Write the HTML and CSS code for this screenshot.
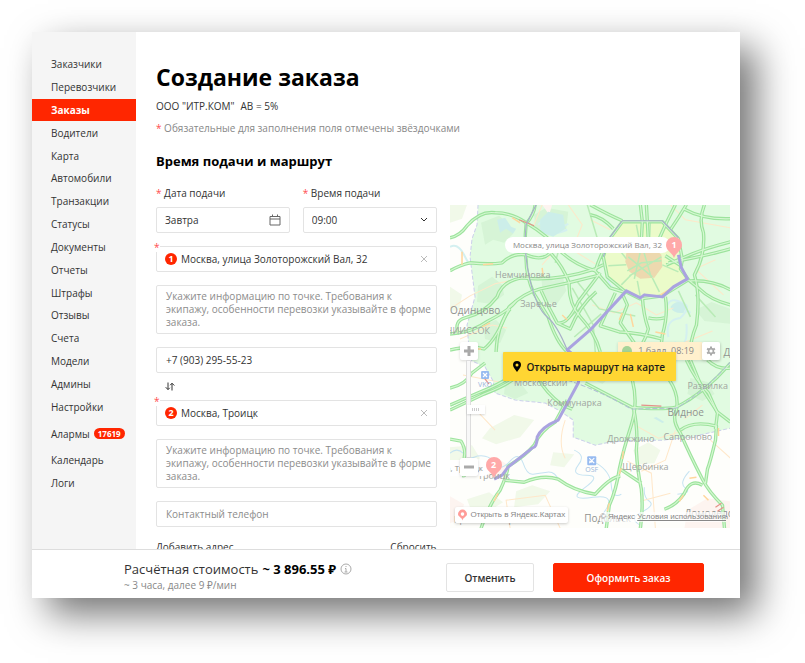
FILE: index.html
```html
<!DOCTYPE html>
<html lang="ru">
<head>
<meta charset="utf-8">
<meta name="viewport" content="width=device-width, initial-scale=1">
<title>Создание заказа</title>
<link rel="stylesheet" href="styles.css">
</head>
<body>
<div class="window">
  <div class="workspace">
    <nav class="sidebar">
      <ul class="menu menu-main">
        <li><a href="#">Заказчики</a></li>
        <li><a href="#">Перевозчики</a></li>
        <li><a href="#" class="active" aria-current="page">Заказы</a></li>
        <li><a href="#">Водители</a></li>
        <li><a href="#">Карта</a></li>
        <li><a href="#">Автомобили</a></li>
        <li><a href="#">Транзакции</a></li>
        <li><a href="#">Статусы</a></li>
        <li><a href="#">Документы</a></li>
        <li><a href="#">Отчеты</a></li>
        <li><a href="#">Штрафы</a></li>
        <li><a href="#">Отзывы</a></li>
        <li><a href="#">Счета</a></li>
        <li><a href="#">Модели</a></li>
        <li><a href="#">Админы</a></li>
        <li><a href="#">Настройки</a></li>
      </ul>
      <ul class="menu">
        <li class="alarms"><a href="#">Алармы <span class="count">17619</span></a></li>
        <li><a href="#">Календарь</a></li>
        <li><a href="#">Логи</a></li>
      </ul>
    </nav>

    <main class="content">
      <h1>Создание заказа</h1>
      <p class="company"><span>ООО "ИТР.КОМ"</span><span>АВ = 5%</span></p>
      <p class="hint"><span class="star">*</span> Обязательные для заполнения поля отмечены звёздочками</p>
      <h2>Время подачи и маршрут</h2>

      <div class="columns">
        <form class="route" id="order">
          <div class="pair">
            <div class="field">
              <label for="date"><span class="star">*</span> Дата подачи</label>
              <div class="box">
                <input id="date" type="text" value="Завтра">
                <svg class="calendar" viewBox="0 0 12 12" aria-hidden="true"><path d="M1 2.500h10v8.500H1zM1 5h10M3.500 0.500v2M8.500 0.500v2"/></svg>
              </div>
            </div>
            <div class="field">
              <label for="time"><span class="star">*</span> Время подачи</label>
              <div class="box">
                <select id="time"><option>09:00</option></select>
                <svg class="chevron" viewBox="0 0 8 6" aria-hidden="true"><path d="M1 1l3 3 3-3"/></svg>
              </div>
            </div>
          </div>

          <div class="box address">
            <span class="star corner">*</span>
            <span class="number">1</span>
            <input type="text" aria-label="Адрес 1" value="Москва, улица Золоторожский Вал, 32">
            <button class="clear" type="button" aria-label="Очистить адрес 1"><svg viewBox="0 0 8 8"><path d="M1 1l6 6M7 1L1 7"/></svg></button>
          </div>
          <textarea class="note" rows="3" aria-label="Информация по точке 1" placeholder="Укажите информацию по точке. Требования к экипажу, особенности перевозки указывайте в форме заказа."></textarea>
          <div class="box"><input type="tel" aria-label="Телефон 1" value="+7 (903) 295-55-23"></div>

          <button class="swap" type="button" aria-label="Поменять адреса местами"><svg viewBox="0 0 10 9"><path d="M3 .5v7M.7 5.2L3 7.6l1.800-1.800M7 8.500V1.500M5.200 3.200L7 1.200l2.300 2.300"/></svg></button>

          <div class="box address">
            <span class="star corner">*</span>
            <span class="number">2</span>
            <input type="text" aria-label="Адрес 2" value="Москва, Троицк">
            <button class="clear" type="button" aria-label="Очистить адрес 2"><svg viewBox="0 0 8 8"><path d="M1 1l6 6M7 1L1 7"/></svg></button>
          </div>
          <textarea class="note" rows="3" aria-label="Информация по точке 2" placeholder="Укажите информацию по точке. Требования к экипажу, особенности перевозки указывайте в форме заказа."></textarea>
          <div class="box"><input type="tel" aria-label="Телефон 2" placeholder="Контактный телефон"></div>
          <div class="links"><a href="#">Добавить адрес</a><a href="#">Сбросить</a></div>
        </form>

        <section class="map" aria-label="Маршрут">
          <svg class="canvas" viewBox="0 0 280 323" preserveAspectRatio="xMidYMid slice">
            <defs>
              <g id="roads">
                <path d="M0 33Q10 31 17 21Q30 6 45 8Q62 8 76 18Q98 31 112 48Q125 60 145 66L160 83L176 88"/>
                <path d="M0 66Q10 60 20 58Q40 60 52 58Q62 48 76 50Q92 57 100 48"/>
                <path d="M85 0Q84 10 76 19Q74 40 76 55Q76 72 84 89Q92 102 98 112Q106 137 117 147"/>
                <path d="M0 129L8 128Q4 116 15 113Q35 108 47 92Q52 76 72 73Q105 77 145 64L153 60"/>
                <path d="M0 145Q22 140 34 144Q47 134 59 102Q74 88 90 84Q120 78 150 70"/>
                <path d="M8 128Q22 127 38 116Q60 105 66 96"/>
                <path d="M60 104Q47 120 46 147M100 48Q112 60 119 78Q118 98 130 112Q145 128 150 147"/>
                <path d="M91 86Q98 102 107 118Q118 120 128 97L150 68M107 118L120 124Q130 100 146 87"/>
                <path d="M140 10Q152 12 163 24M140 0Q158 10 172 16M145 66Q150 50 158 36L172 17L212 17L228 34L232 55L230 64L238 75L212 91L190 94L174 86L157 72L153 52L158 36"/>
                <path d="M190 0L192 17L191 36M196 0L197 17L198 37M225 0L216 18L207 38M236 0Q229 12 220 25M280 37Q257 43 242 49L216 60M280 44Q260 50 218 58"/>
                <path d="M254 0Q248 15 253 28Q255 50 244 70Q250 90 246 120Q238 140 240 155L252 184L267 207L280 217"/>
                <path d="M280 14Q253 15 233 4M280 100Q260 95 249 84L238 75M232 62L215 51M240 76Q262 75 280 85"/>
                <path d="M192 92Q193 110 198 124Q194 140 184 147L182 175Q188 198 181 220Q173 245 169 264Q166 285 159 300L156 323"/>
                <path d="M215 92Q218 110 212 130L210 147L219 175Q229 190 226 205Q221 215 230 228Q239 249 252 274Q258 286 272 300L274 323"/>
                <path d="M198 113Q206 115 214 113M165 88L150 121L169 127Q190 128 211 134M172 89L177 100L170 118L184 138L182 147"/>
                <path d="M0 200L30 187Q48 180 60 172M0 205L34 189Q55 181 65 173M0 183Q15 180 22 168L35 158"/>
                <path d="M88 173Q95 187 112 200L122 204M135 178L181 202Q210 205 226 202Q255 187 280 158"/>
                <path d="M0 234L11 236Q18 247 12 260L14 272M31 323Q39 299 50 285Q57 270 58 261Q75 251 84 240Q90 226 105 217L117 195"/>
                <path d="M54 275L74 277Q93 269 108 274Q124 286 145 289Q160 272 170 271"/>
                <path d="M183 202Q188 225 186 245Q187 266 191 284Q193 302 190 323M170 264L191 278"/>
                <path d="M230 225Q243 215 266 221L265 235Q260 256 257 264L255 278M214 304Q226 300 234 288Q240 273 252 280"/>
                <path d="M236 155Q245 175 258 188L267 208L265 224M257 155Q267 165 280 163"/>
              </g>
            </defs>
            <rect width="280" height="323" fill="#fefefb"/>
            <path d="M28 0L27 20L22 34L20 52L25 92L17 120L20 155L35 162L43 176L45 188L65 195L95 198L110 206L123 215L123 232L145 240L160 237L185 235L213 235L240 232L280 223V0Z" fill="#dcfbdc"/>
            <g fill="#cff3cf">
              <path d="M31 18l18-7 9 8 5 10-9 9-11-3-8 5zM28 81l14-9 10 8 2 10-12 9-15-2zM33 120l13-5 10 10-6 13-15-4zM91 70l12 6 10-3 3 13-10 14-13-5zM245 105l16-8 19 7v15l-26-3zM84 10l12-7 22 4-2 17-18 7-13-8zM144 147l15 5 7 15-14 12-14-7zM240 173l17 4 7 12-12 7-15-7zM55 177l16 2 7 9-13 6-11-5z"/>
            </g>
            <g fill="#eff8e6">
              <path d="M0 0h17l-5 14-12 4zM0 82l12 8-3 15-9 1zM40 223l24-13 20 5-14 17-24 7-14-6zM0 242l22-2 8 13-16 9-14-4zM66 286l16-6 18 6-12 13-24 3zM183 245l15-8 12 8-6 13-17 1zM17 294l22-7 14 10-13 8-20-3zM103 247l21 2-10 13-14-2z"/>
            </g>
            <path d="M237 305l20-12 23 3v27h-46zM0 291l14 8-4 15-10 4zM92 0h10l-3 10zM38 261l10-8 10 7-9 12-13 1z" fill="#fdf3ee"/>
            <g fill="none" stroke="#cdeeee" stroke-width="2">
              <path d="M0 42Q8 38 14 50T20 58M88 20Q98 10 105 17T118 19M90 27Q104 31 117 25M157 70Q158 83 166 85M218 132Q214 115 230 113Q242 101 232 98Q220 91 216 102M224 137Q238 147 236 119M232 102L240 108"/>
            </g>
            <path d="M47 15l8-2 6 9 5 2-3 5-7-5-6 4zM90 15l8-8 15 3 2 14-12 8-13-5zM220 102q7-9 16-1l-3 7q-10 1-13-6zM203 213l9 5 2-1-8-5z" fill="#c4ece6"/>
            <g fill="none" stroke="#bcdff0" stroke-width="1">
              <path d="M0 248q7-6 13 0t11 4 11-1 11 8 14-3 13 2 10 11 14-2 12 9M124 245q12 5 4 15t8 10-2 13 9 9 7 20M146 258q14 8 15 22t10 9M194 282q-1 10 5 14t-8 11 1 14M239 266q-11 12-4 17t-8 6"/>
            </g>
            <g fill="none" stroke="#ffe4c0" stroke-width="1">
              <path d="M0 104L20 91 45 79 65 75M10 134L42 120 57 123M92 60l14-16 19-7 20 7M142 100l22 8 22-10 20 12 17-7M45 225L28 207M115 215q-8 23 0 38M13 170l36 7 23-8M205 323l-4-55-24-12M183 219l25 14 24-7M252 200l-18 14M60 323l-4-28 39-5 15 33M140 15l20 10M225 225l-10 30-24 11M260 235l20 18M220 288l-30 8"/>
              <path d="M220 0l15 15 45 8M265 55l-20 9 28 26M262 126l-34 14 7 14M92 0l-9 22M118 0l14 20-10 25 23 14"/>
            </g>
            <path d="M172 16L212 16L228 33L231 62L237 74L210 92L190 93L173 85L157 70L153 52L160 32Z" fill="#e8fbc0"/>
            <path d="M176 48l11-8 15 2 9 8 1 12-8 11-14 1-11-7-4-10z" fill="#ead3a2"/>
            <path d="M28 0L27 20L22 34L20 52L25 92L17 120L20 155L35 162L43 176L45 188L65 195L95 198L110 206L123 215L123 232L145 240L160 237L185 235L213 235L240 232L280 223" fill="none" stroke="#c3c8e8" stroke-dasharray="4 2"/>
            <g fill="none" stroke="#ade8aa" stroke-width="1.500">
              <path d="M162 36l14 18M158 61l18-1M171 80l10-10M190 92l-3-16M209 87l-7-14M228 67l-16-7M225 35l-15 12M186 20l4 20M200 18l-1 22M177 66l14-8 20-2M184 74l7-32M201 73l-9-31M178 52l24 20M211 52l-32 19"/>
              <path d="M122 83l21 37 2 27M127 77l22 27 36 7M142 92l-24 22M151 109l-27 23M245 90l20 22M228 86l12 26M137 0l12 40M110 40l-5 18"/>
            </g>
            <use href="#roads" fill="none" stroke="#8cdf8c" stroke-width="3.400" stroke-linejoin="round"/>
            <use href="#roads" fill="none" stroke="#cff7cb" stroke-width="1.200" stroke-linejoin="round"/>
            <g fill="none" stroke="#ffd08c" stroke-width="1.500">
              <path d="M12 47v13M33 60l10-1M62 13l8 5M92 63l1 9M32 122l8-4M112 110l5 5M25 144l6 0M48 288l-4 8M173 246l-1 8M169 269l2-6M233 290l-4 6M239 273l7-1M159 298l-2 8M268 223v8M153 35l-4 12M180 109l3 13M210 90l12-7M253 290l5 5M205 127l10 2M169 115l3-7M210 44l15-7"/>
            </g>
            <g fill="none" stroke="#e07f74" stroke-width="1.200"><path d="M69 15l15 6M191 200l20 1M36 166l-1 8 4 5M265 302l6-4M267 306l6-4"/></g>
            <path d="M86 0L76 20Q73 48 80 76T97 112T117 145M153 52L160 32L172 16H212L228 33" fill="none" stroke="#99a2c0" stroke-width="1.200"/>
            <path d="M97 170Q136 178 181 204L226 203Q250 190 280 157" fill="none" stroke="#a3b5cc" stroke-dasharray="5 2"/>
            <path d="M228 50L231 63L237 74L223 82L212 92L194 90L190 93L176 86L140 125L117 145Q134 156 128 178L108 215Q91 222 87 232Q87 242 82 243L58 262L52 270L44 274" fill="none" stroke="#9c93db" stroke-width="3" stroke-linejoin="round"/>
            <g class="places">
              <text x="45" y="73">Немчиновка</text><text x="70" y="102">Заречье</text>
              <text class="city" x="0" y="109">Одинцово</text><text x="-10" y="129">ВНИИССОК</text>
              <text x="64" y="181">Московский</text><text x="97" y="201">Коммунарка</text>
              <text x="237" y="184">Развилка</text><text class="city" x="217" y="211">Видное</text>
              <text x="157" y="237">Дрожжино</text><text x="213" y="235">Сапроново</text>
              <text x="172" y="265">Щербинка</text><text x="28" y="274">Троицк</text>
              <text x="4" y="318">Красная Пахра</text><text class="city" x="134" y="317">Подольск</text>
              <text class="city" x="234" y="312">Домодедово</text><text class="city" x="273" y="151">Дзержинский</text>
              <text class="port" x="28" y="182">VKO</text><text class="port" x="135" y="267">OSF</text>
            </g>
            <g fill="#86b0ee"><rect x="31" y="166" width="8" height="8" rx="1"/><rect x="137" y="251" width="9" height="9" rx="1"/></g>
            <path d="M139 253l5 5M144 253l-5 5M139 256l3 1M33 168l4 4M37 168l-4 4" stroke="#fff" stroke-width="1.200"/>
          </svg>

          <span class="place place-from">Москва, улица Золоторожский Вал, 32</span>
          <span class="place place-to">Москва, Троицк</span>
          <span class="pin pin-from"><svg viewBox="0 0 16 22" aria-hidden="true"><path d="M8 0a8 8 0 0 1 8 8c0 6-6 7-8 13C6 15 0 14 0 8a8 8 0 0 1 8-8z"/></svg><b>1</b></span>
          <span class="pin pin-to"><svg viewBox="0 0 16 22" aria-hidden="true"><path d="M8 0a8 8 0 0 1 8 8c0 6-6 7-8 13C6 15 0 14 0 8a8 8 0 0 1 8-8z"/></svg><b>2</b></span>

          <div class="zoom">
            <button type="button" aria-label="Приблизить"><svg viewBox="0 0 10 10"><path d="M5 0v10M0 5h10"/></svg></button>
            <span class="track"><i></i></span>
            <button type="button" aria-label="Отдалить"><svg viewBox="0 0 10 10"><path d="M0 5h10"/></svg></button>
          </div>

          <div class="traffic">
            <span class="score"><i></i>1 балл, 08:19</span>
            <button type="button" aria-label="Настройки пробок"><svg viewBox="0 0 12 12"><path d="M6 1.500v9M2.100 3.700l7.800 4.600M9.900 3.700L2.100 8.300" stroke-width="2"/><circle cx="6" cy="6" r="2.400" fill="#fff" stroke-width="1.600"/></svg></button>
          </div>

          <button class="open-route" type="button"><svg viewBox="0 0 8 11" aria-hidden="true"><path d="M4 0a4 4 0 0 1 4 4c0 2.500-2.500 4.500-4 7C2.500 8.500 0 6.500 0 4a4 4 0 0 1 4-4zm0 2.500a1.500 1.500 0 1 0 0 3 1.500 1.500 0 0 0 0-3z"/></svg>Открыть маршрут на карте</button>

          <a class="yandex" href="#"><svg viewBox="0 0 10 12" aria-hidden="true"><path d="M5 0a5 5 0 0 1 5 5c0 3-4 3.500-5 7C4 8.500 0 8 0 5a5 5 0 0 1 5-5zm0 3a2 2 0 1 0 0 4 2 2 0 0 0 0-4z"/></svg>Открыть в Яндекс.Картах</a>
          <small class="terms">© Яндекс <a href="#">Условия использования</a></small>
        </section>
      </div>
    </main>
  </div>

  <footer class="summary">
    <div class="price">
      <p class="total">Расчётная стоимость <b>~ 3 896.55 ₽</b> <svg viewBox="0 0 12 12" role="img" aria-label="Подробнее"><circle cx="6" cy="6" r="5"/><path d="M6 3v1M5 5.500h1V9M4.500 9h3"/></svg></p>
      <p class="rate">~ 3 часа, далее 9 ₽/мин</p>
    </div>
    <button class="cancel" type="button">Отменить</button>
    <button class="submit" type="submit" form="order">Оформить заказ</button>
  </footer>
</div>
</body>
</html>
```
FILE: styles.css
```css
* {
  box-sizing: border-box;
}

body {
  margin: 0;
  padding: 32px 65px 65px 32px;
  height: 100vh;
  overflow: hidden;
  background: #fff;
  color: #333;
  font: 10px/14px "Open Sans", "Noto Sans", sans-serif;
}

h1, h2, p, ul {
  margin: 0;
  padding: 0;
}

button, input, select, textarea {
  font: inherit;
  color: inherit;
}

button {
  padding: 0;
  border: 0;
  background: none;
}

a {
  color: inherit;
  text-decoration: none;
}

svg {
  display: block;
  fill: none;
  stroke: currentColor;
}

.window {
  display: flex;
  flex-direction: column;
  height: 100%;
  background: #fff;
  box-shadow: 16px 16px 36px rgba(0, 0, 0, 0.55);
}

.workspace {
  display: flex;
  flex: 1;
  min-height: 0;
  overflow: hidden;
}

/* Sidebar */

.sidebar {
  flex: 0 0 104px;
  padding-top: 21px;
  background: #f5f5f5;
}

.menu {
  list-style: none;
}

.menu-main {
  display: grid;
  grid-auto-rows: 1fr;
  height: 365px;
}

.menu a {
  display: flex;
  align-items: center;
  gap: 4px;
  height: 100%;
  min-height: 22px;
  padding-left: 19px;
}

.menu li {
  min-height: 23px;
}

.menu-main li {
  min-height: 0;
}

.menu .active {
  background: #ff2600;
  color: #fff;
  font-weight: 700;
}

.menu .alarms a {
  height: 31px;
}

.count {
  padding: 0 4px;
  border-radius: 6px;
  background: #ff2600;
  color: #fff;
  font-size: 8px;
  font-weight: 700;
  line-height: 11px;
}

/* Order form */

.content {
  flex: 1;
  min-width: 0;
  padding: 29px 10px 0 20px;
}

h1 {
  color: #000;
  font-size: 23px;
  line-height: 32px;
}

.company {
  display: flex;
  gap: 6px;
  margin-top: 6px;
}

.hint {
  margin-top: 8px;
  color: #888;
}

.star {
  color: #ff4d4f;
}

h2 {
  margin-top: 17px;
  color: #000;
  font-size: 13px;
  line-height: 18px;
}

.columns {
  display: grid;
  grid-template-columns: 1fr 1fr;
  gap: 13px;
  margin-top: 16px;
}

.route {
  display: flex;
  flex-direction: column;
  gap: 13px;
}

.pair {
  display: grid;
  grid-template-columns: repeat(2, minmax(0, 1fr));
  gap: 13px;
}

.field label {
  display: block;
  margin-bottom: 7px;
}

.box {
  position: relative;
  display: flex;
  align-items: center;
  height: 26px;
  padding: 0 9px;
  border: 1px solid #e3e3e3;
  border-radius: 2px;
}

.field .box {
  padding: 0 8px;
}

.box input, .box select {
  flex: 1;
  min-width: 0;
  padding: 0;
  border: 0;
  outline: 0;
  background: none;
  appearance: none;
}

::placeholder {
  color: #8c8c8c;
  opacity: 1;
}

.calendar {
  width: 12px;
  height: 12px;
  color: #666;
}

.chevron {
  width: 8px;
  height: 6px;
}

.box.address {
  gap: 4px;
  padding: 0 8px;
}

.corner {
  position: absolute;
  top: -5px;
  left: -3px;
  width: 6px;
  height: 10px;
  background: #fff;
  line-height: 10px;
}

.number {
  width: 12px;
  height: 12px;
  border-radius: 50%;
  background: #ff2600;
  color: #fff;
  font-size: 9px;
  font-weight: 700;
  line-height: 12px;
  text-align: center;
}

.clear svg {
  width: 8px;
  height: 8px;
  color: #bbb;
}

.note {
  display: block;
  width: 100%;
  height: 49px;
  padding: 4px 2px 4px 9px;
  border: 1px solid #e3e3e3;
  border-radius: 2px;
  line-height: 13px;
  resize: none;
  overflow: hidden;
}

.swap {
  align-self: flex-start;
  margin: -4px 0 -4px 9px;
}

.swap svg {
  width: 10px;
  height: 9px;
}

.links {
  display: flex;
  justify-content: space-between;
}

/* Map */

.map {
  position: relative;
  align-self: start;
  height: 323px;
  margin-top: 19px;
  overflow: hidden;
  color: #888;
}

.canvas {
  width: 100%;
  height: 100%;
  stroke: none;
  opacity: 0.85;
}

.places {
  fill: #8f948f;
  font-size: 9px;
}

.places .city {
  fill: #7d827d;
  font-size: 10px;
}

.places .port {
  fill: #8aaad4;
  font-size: 7px;
}

.place {
  position: absolute;
  padding: 0 8px;
  border-radius: 8px;
  background: #fff;
  font-size: 8px;
  line-height: 16px;
  white-space: nowrap;
}

.place-from {
  top: 32px;
  right: 60px;
}

.place-to {
  top: 255px;
  right: 239px;
}

.pin {
  position: absolute;
  width: 16px;
  height: 22px;
}

.pin svg {
  fill: #ffa9a9;
  stroke: none;
}

.pin b {
  position: absolute;
  inset: 0;
  color: #fff;
  font-size: 9px;
  line-height: 16px;
  text-align: center;
}

.pin-from {
  top: 32px;
  right: 48px;
}

.pin-to {
  top: 252px;
  left: 36px;
}

.zoom {
  position: absolute;
  top: 137px;
  left: 10px;
  display: flex;
  flex-direction: column;
  align-items: center;
  width: 18px;
  height: 134px;
}

.zoom button, .traffic button {
  display: grid;
  place-items: center;
  width: 18px;
  height: 18px;
  border-radius: 2px;
  background: #fff;
  box-shadow: 0 1px 3px rgba(0, 0, 0, 0.15);
}

.zoom button svg {
  width: 10px;
  height: 10px;
  stroke: #aaa;
  stroke-width: 3;
}

.track {
  display: grid;
  place-items: center;
  flex: 1;
  width: 5px;
  border: 1px solid #ddd;
  background: #f8f8f8;
}

.track i {
  width: 18px;
  height: 9px;
  border: 3px solid #fff;
  border-width: 3px 5px;
  background: repeating-linear-gradient(90deg, #ccc 0 1px, #fff 1px 2px);
  box-shadow: 0 1px 2px rgba(0, 0, 0, 0.15);
}

.traffic {
  position: absolute;
  top: 137px;
  right: 10px;
  display: flex;
  box-shadow: 0 1px 3px rgba(0, 0, 0, 0.15);
}

.score {
  display: flex;
  align-items: center;
  gap: 6px;
  height: 18px;
  padding: 0 8px 0 4px;
  background: #fff0cd;
  font-size: 9px;
}

.score i {
  width: 10px;
  height: 10px;
  border-radius: 50%;
  background: #a5d498;
}

.traffic svg {
  width: 12px;
  height: 12px;
  color: #aaa;
}

.open-route {
  position: absolute;
  top: 147px;
  left: 50%;
  display: flex;
  align-items: center;
  justify-content: center;
  gap: 5px;
  width: 173px;
  height: 29px;
  margin-left: -87px;
  border-radius: 1px;
  background: #ffd633;
  box-shadow: 0 1px 3px rgba(0, 0, 0, 0.2);
  color: #1a1a1a;
  font-weight: 600;
  white-space: nowrap;
}

.open-route svg {
  width: 8px;
  height: 11px;
  fill: #000;
  stroke: none;
}

.yandex {
  position: absolute;
  bottom: 5px;
  left: 5px;
  display: flex;
  align-items: center;
  gap: 4px;
  height: 16px;
  padding: 0 3px;
  border-radius: 2px;
  background: #fff;
  box-shadow: 0 1px 3px rgba(0, 0, 0, 0.2);
  font: 8px/16px "Liberation Sans", sans-serif;
}

.yandex svg {
  width: 9px;
  height: 12px;
  fill: #ff9c98;
  stroke: none;
}

.terms {
  position: absolute;
  right: 4px;
  bottom: 6px;
  background: rgba(255, 255, 255, 0.7);
  font: 8px/10px "Liberation Sans", sans-serif;
}

.terms a {
  text-decoration: underline;
}

/* Order summary */

.summary {
  display: flex;
  align-items: flex-start;
  gap: 19px;
  height: 49px;
  padding: 13px 36px 0 92px;
  border-top: 1px solid #ddd;
  background: #fff;
}

.price {
  flex: 1;
  margin-top: -3px;
  white-space: nowrap;
}

.total {
  display: flex;
  align-items: center;
  gap: 4px;
  font-size: 13px;
  line-height: 18px;
}

.total b {
  color: #000;
}

.total svg {
  width: 12px;
  height: 12px;
  color: #aaa;
}

.rate {
  color: #888;
}

.cancel, .submit {
  height: 29px;
  border: 1px solid #e3e3e3;
  border-radius: 2px;
  font-weight: 600;
}

.cancel {
  width: 88px;
}

.submit {
  width: 151px;
  border-color: #ff2600;
  background: #ff2600;
  color: #fff;
}
```
